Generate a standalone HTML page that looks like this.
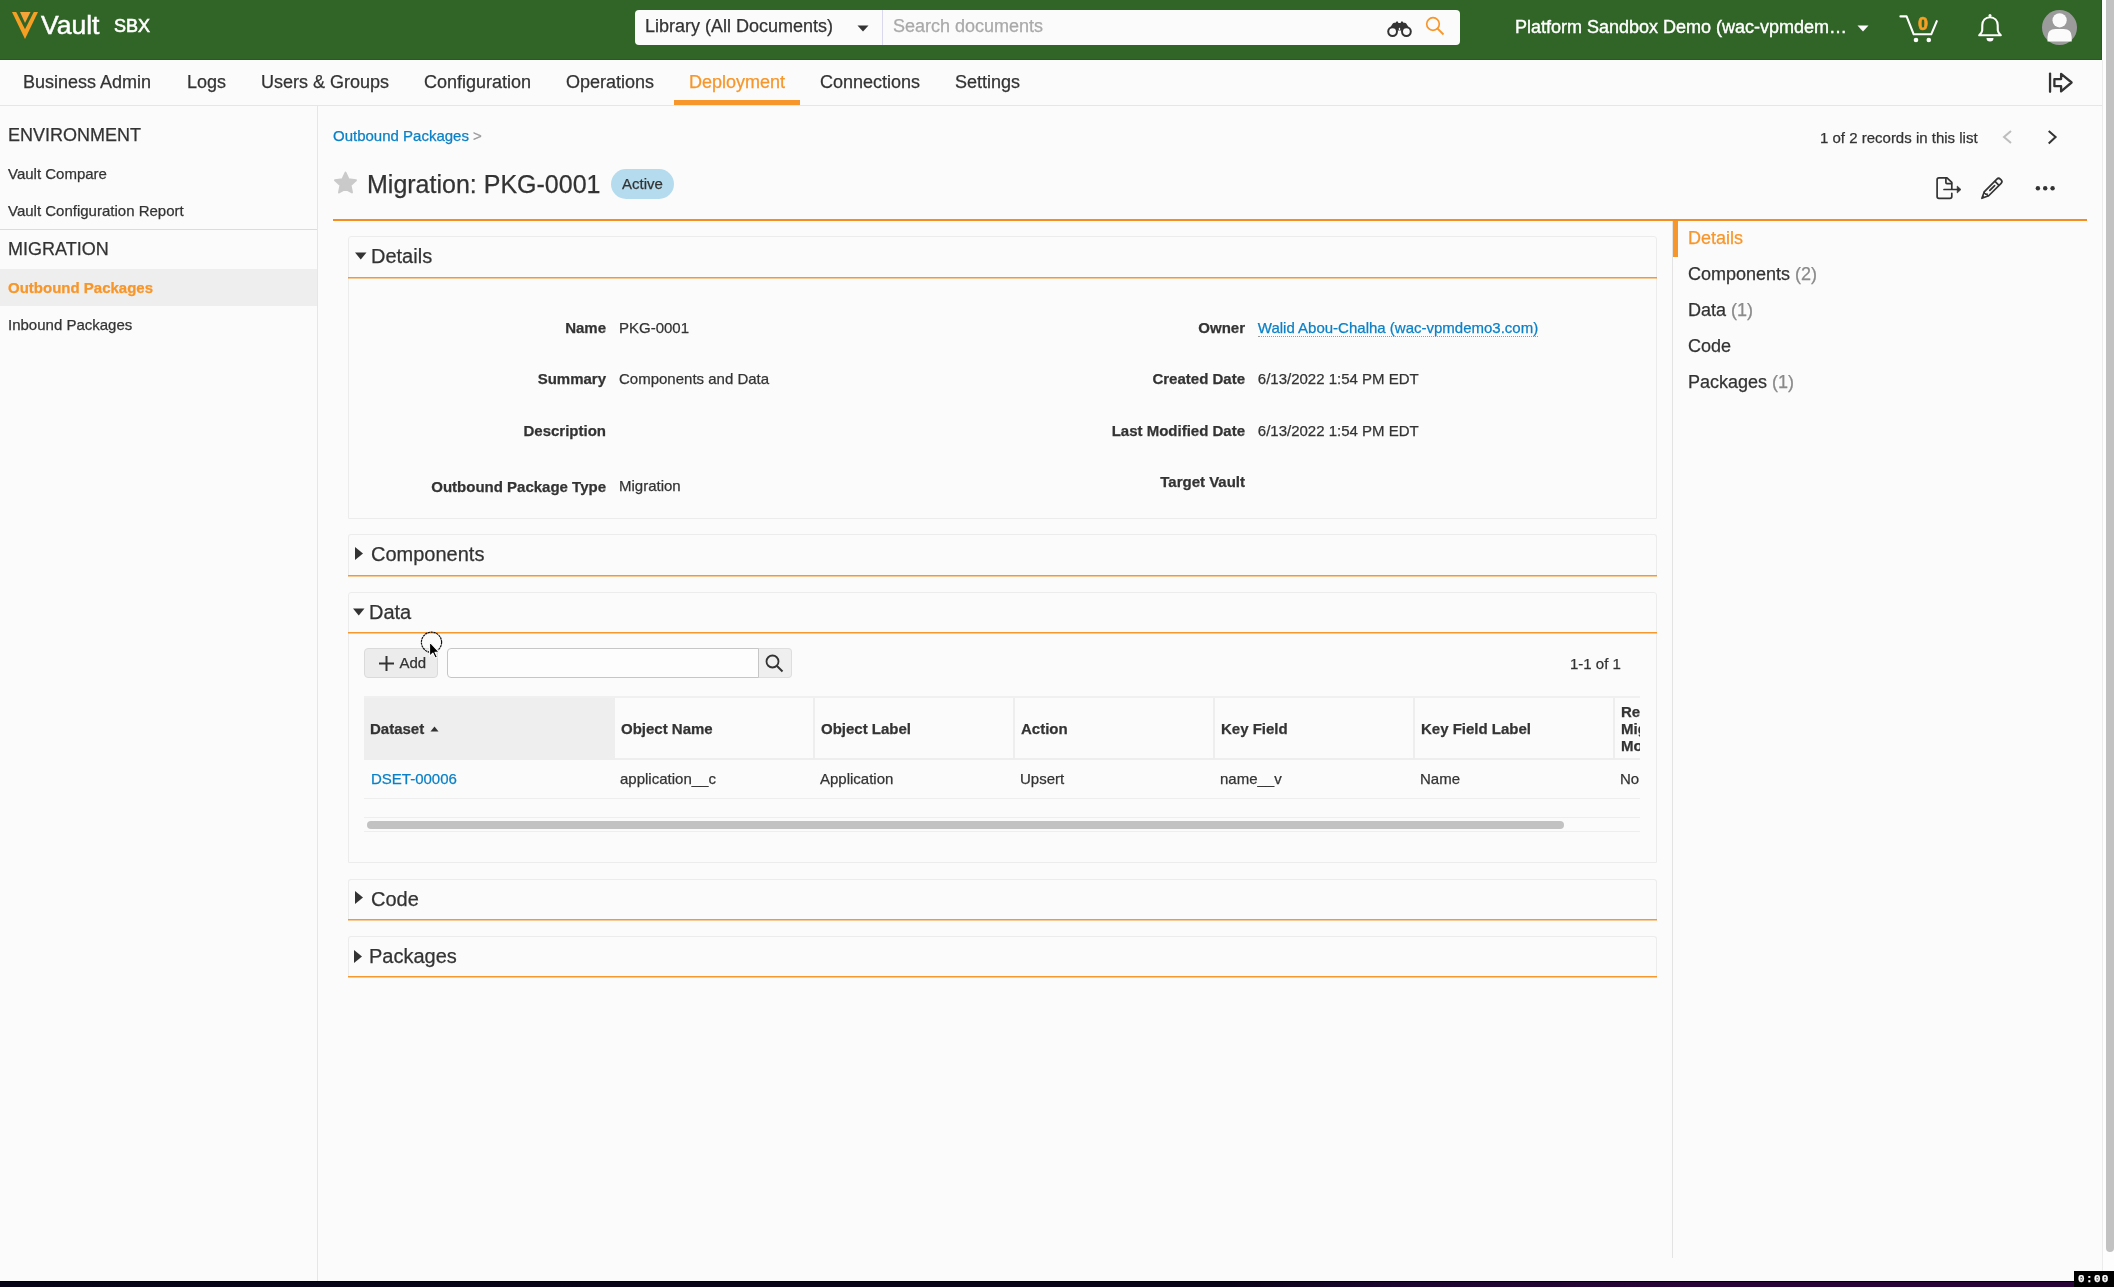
<!DOCTYPE html>
<html><head><meta charset="utf-8">
<style>
*{box-sizing:border-box;margin:0;padding:0}
body *{-webkit-text-stroke:0.25px currentColor}
html,body{width:2114px;height:1287px;overflow:hidden;background:#fbfbfb;font-family:"Liberation Sans",sans-serif;color:#333}
.a{position:absolute;white-space:nowrap}
#hdr{position:absolute;left:0;top:0;width:2102px;height:60px;background:#316527;border-right:1px solid #245c1a;border-bottom:1px solid #245c1a}
#nav{position:absolute;left:0;top:60px;width:2102px;height:46px;border-bottom:1px solid #e6e6e6;background:#fbfbfb}
.ni{position:absolute;top:72px;font-size:18px;line-height:21px;color:#333}
#side{position:absolute;left:0;top:106px;width:318px;height:1175px;border-right:1px solid #e6e6e6}
.sh{font-size:18px;line-height:21px;color:#333}
.sl{font-size:15px;line-height:18px;color:#333}
.lnk,.a.lnk,.td.lnk,.val.lnk,.sl.lnk{color:#0b80c6}
.org,.a.org,.rn.org,.sl.org,.ni.org{color:#f7962a}
.sec{position:absolute;left:348px;width:1309px;border:1px solid #ececec;border-bottom:none;border-radius:3px 3px 0 0}
.secbar{position:absolute;left:348px;width:1309px;height:1px;background:#f7982e;box-shadow:0 1px 0 rgba(247,152,46,0.5)}
.sect{font-size:20px;line-height:23px;color:#333}
.lbl{font-size:15px;line-height:18px;font-weight:bold;color:#333;text-align:right}
.val{font-size:15px;line-height:18px;color:#333}
.th{font-size:15px;line-height:18px;font-weight:bold;color:#333}
.td{font-size:15px;line-height:18px;color:#333}
.rn{font-size:18px;line-height:21px;color:#333}
.cnt{color:#8a8a8a}
</style></head><body><div id="wrap" style="position:absolute;left:0;top:0;width:2114px;height:1287px;will-change:transform">

<!-- HEADER -->
<div id="hdr"></div>
<svg class="a" style="left:11px;top:11px" width="28" height="28" viewBox="0 0 28 28">
  <polygon points="1,1 27,1 14,28" fill="#f5a024"/>
  <polygon points="5.2,1 22.8,1 14,18.2" fill="#316527"/>
  <polygon points="9,1 19.5,1 14,12" fill="#f5a43a"/>
</svg>
<div class="a" style="left:41px;top:10px;font-size:26.5px;line-height:30px;color:#fff;-webkit-text-stroke:0.5px #fff">Vault</div>
<div class="a" style="left:114px;top:16px;font-size:18px;line-height:21px;color:#fff;-webkit-text-stroke:0.6px #fff">SBX</div>

<div class="a" style="left:635px;top:10px;width:825px;height:35px;background:#fbfbfb;border-radius:4px"></div>
<div class="a" style="left:882px;top:10px;width:1px;height:35px;background:#d8d8ee"></div>
<div class="a" style="left:645px;top:16px;font-size:18px;line-height:21px;color:#333">Library (All Documents)</div>
<svg class="a" style="left:857px;top:25px" width="12" height="7" viewBox="0 0 12 7"><polygon points="0.5,0.5 11.5,0.5 6,6.5" fill="#333"/></svg>
<div class="a" style="left:893px;top:16px;font-size:18px;line-height:21px;color:#a9a9a9">Search documents</div>
<!-- binoculars -->
<svg class="a" style="left:1386px;top:20px" width="27" height="18" viewBox="0 0 27 18">
  <path d="M2.2,10.5 L6.8,3.6 Q7.4,2.7 8.4,2.7 L9.6,2.7 L10.4,1.6 L11.8,1.6 L12.4,3 L14.6,3 L15.2,1.6 L16.6,1.6 L17.4,2.7 L18.6,2.7 Q19.6,2.7 20.2,3.6 L24.8,10.5 Z" fill="#333"/>
  <circle cx="6.6" cy="11.6" r="4.4" fill="#fbfbfb" stroke="#333" stroke-width="2"/>
  <circle cx="20.4" cy="11.6" r="4.4" fill="#fbfbfb" stroke="#333" stroke-width="2"/>
  <path d="M13.5,7.6 L14.4,9 L13.5,10.4 L12.6,9 Z" fill="#fbfbfb"/>
</svg>
<!-- magnifier -->
<svg class="a" style="left:1424px;top:16px" width="22" height="20" viewBox="0 0 22 20">
  <circle cx="9" cy="8" r="6.3" fill="none" stroke="#f7962a" stroke-width="1.7"/>
  <line x1="13.5" y1="12.5" x2="19.5" y2="18.5" stroke="#f7962a" stroke-width="1.8"/>
</svg>

<div class="a" style="left:1515px;top:17px;font-size:18px;line-height:21px;color:#fff;-webkit-text-stroke:0.4px #fff">Platform Sandbox Demo (wac-vpmdem…</div>
<svg class="a" style="left:1857px;top:25px" width="12" height="7" viewBox="0 0 12 7"><polygon points="0.5,0.5 11.5,0.5 6,6.5" fill="#fff"/></svg>
<!-- cart -->
<svg class="a" style="left:1899px;top:13px" width="42" height="32" viewBox="0 0 42 32">
  <path d="M1.4,3.4 L7.6,3.4 L14.7,21.3 L32.2,21.3 L37.8,8.1" fill="none" stroke="#fff" stroke-width="2.1" stroke-linejoin="round" stroke-linecap="round"/>
  <circle cx="17" cy="27" r="2.3" fill="#fff"/>
  <circle cx="29.8" cy="27" r="2.3" fill="#fff"/>
</svg>
<div class="a" style="left:1918px;top:14px;font-size:18px;line-height:20px;font-weight:bold;color:#f7a024;-webkit-text-stroke:0.7px #f7a024">0</div>
<!-- bell -->
<svg class="a" style="left:1977px;top:13px" width="26" height="30" viewBox="0 0 26 30">
  <path d="M13,4.2 C8.5,4.2 5.5,7.5 5.3,12 L5.2,19 C5.1,21 4,22.5 2,24.5 L1.8,22.3 M13,4.2 C17.5,4.2 20.5,7.5 20.7,12 L20.8,19 C20.9,21 22,22.5 24,24.5" fill="none" stroke="none"/>
  <path d="M13,4.2 C8.5,4.2 5.5,7.5 5.3,12 L5.2,17.5 C5.1,19.5 3.8,20.8 2.2,22.3 L23.8,22.3 C22.2,20.8 20.9,19.5 20.8,17.5 L20.7,12 C20.5,7.5 17.5,4.2 13,4.2 Z" fill="none" stroke="#fff" stroke-width="2.1" stroke-linejoin="round"/>
  <circle cx="13" cy="2.6" r="1.5" fill="#fff"/>
  <path d="M9.5,25 A3.5,3.5 0 0 0 16.5,25 Z" fill="#fff"/>
</svg>
<!-- avatar -->
<svg class="a" style="left:2042px;top:10px" width="35" height="35" viewBox="0 0 35 35">
  <circle cx="17.5" cy="17.5" r="17.5" fill="#9b9b9b"/>
  <circle cx="17.6" cy="10.3" r="7.1" fill="#fbfbfb"/>
  <path d="M5.5,31.4 L5.5,27 Q5.5,19.1 13.5,19.1 L21.7,19.1 Q29.7,19.1 29.7,27 L29.7,31.4 Z" fill="#fbfbfb"/>
</svg>

<!-- NAV -->
<div id="nav"></div>
<div class="ni" style="left:23px">Business Admin</div>
<div class="ni" style="left:187px">Logs</div>
<div class="ni" style="left:261px">Users &amp; Groups</div>
<div class="ni" style="left:424px">Configuration</div>
<div class="ni" style="left:566px">Operations</div>
<div class="ni org" style="left:689px">Deployment</div>
<div class="a" style="left:674px;top:100px;width:126px;height:5px;background:#f7962a"></div>
<div class="ni" style="left:820px">Connections</div>
<div class="ni" style="left:955px">Settings</div>
<svg class="a" style="left:2047px;top:70px" width="28" height="25" viewBox="0 0 28 25">
  <line x1="3.05" y1="3.6" x2="3.05" y2="21.8" stroke="#333" stroke-width="2.3" stroke-linecap="round"/>
  <path d="M7.4,9.1 L14.1,9.1 L14.1,3.9 L24.6,12.5 L14.1,21.4 L14.1,16.2 L7.4,16.2 Z" fill="none" stroke="#333" stroke-width="2.3" stroke-linejoin="round"/>
</svg>

<!-- SCROLLBAR -->
<div class="a" style="left:2102px;top:60px;width:1px;height:1221px;background:#ececec"></div>
<div class="a" style="left:2103px;top:0;width:11px;height:1281px;background:#fdfdfd"></div>
<div class="a" style="left:2106px;top:0;width:8px;height:1252px;background:#c2c2c2;border-radius:0 0 4px 4px"></div>

<!-- SIDEBAR -->
<div id="side"></div>
<div class="a sh" style="left:8px;top:125px">ENVIRONMENT</div>
<div class="a sl" style="left:8px;top:165px">Vault Compare</div>
<div class="a sl" style="left:8px;top:202px">Vault Configuration Report</div>
<div class="a" style="left:0;top:229px;width:317px;height:1px;background:#dcdcdc"></div>
<div class="a sh" style="left:8px;top:239px">MIGRATION</div>
<div class="a" style="left:0;top:269px;width:317px;height:37px;background:#eeeeee"></div>
<div class="a sl org" style="left:8px;top:279px;font-weight:bold">Outbound Packages</div>
<div class="a sl" style="left:8px;top:316px">Inbound Packages</div>

<!-- MAIN HEAD -->
<div class="a sl lnk" style="left:333px;top:127px">Outbound Packages</div>
<div class="a sl" style="left:473px;top:127px;color:#999">&gt;</div>
<div class="a sl" style="left:1820px;top:129px">1 of 2 records in this list</div>
<svg class="a" style="left:2001px;top:129px" width="12" height="16" viewBox="0 0 12 16"><polyline points="10,2 3,8 10,14" fill="none" stroke="#bdbdbd" stroke-width="2"/></svg>
<svg class="a" style="left:2046px;top:129px" width="12" height="16" viewBox="0 0 12 16"><polyline points="2.7,2 9.6,8 2.7,14.5" fill="none" stroke="#333" stroke-width="2"/></svg>

<svg class="a" style="left:333px;top:170px" width="24" height="24" viewBox="0 0 24 24">
  <polygon points="12.50,2.60 15.62,9.31 22.96,10.20 17.54,15.24 18.97,22.50 12.50,18.90 6.03,22.50 7.46,15.24 2.04,10.20 9.38,9.31" fill="#cacaca" stroke="#cacaca" stroke-width="2" stroke-linejoin="round"/>
</svg>
<div class="a" style="left:367px;top:170px;font-size:25px;line-height:29px;color:#333">Migration: PKG-0001</div>
<div class="a" style="left:611px;top:169px;width:63px;height:30px;border-radius:15px;background:#b5dbee"></div>
<div class="a" style="left:622px;top:175px;font-size:15px;line-height:18px;color:#333">Active</div>

<!-- export icon -->
<svg class="a" style="left:1930px;top:170px" width="80" height="36" viewBox="0 0 80 36">
  <g fill="none" stroke="#333" stroke-width="1.7" stroke-linejoin="round" stroke-linecap="round">
  <path d="M21.8,19.2 L21.8,12.3 L17,7.9 L9,7.9 Q7.1,7.9 7.1,9.8 L7.1,26.4 Q7.1,28.3 9,28.3 L19.9,28.3 Q21.8,28.3 21.8,26.4 L21.8,23.3"/>
  <path d="M15.9,8.2 L15.9,12.6 Q15.9,13.6 16.9,13.6 L21.5,13.6"/>
  <line x1="14" y1="19.5" x2="27.5" y2="19.5"/>
  </g>
  <polygon points="27.2,16 31,19.5 27.2,23" fill="#333" stroke="#333" stroke-width="0.6" stroke-linejoin="round"/>
  <g transform="translate(51.6,28.6) rotate(-45)" fill="none" stroke="#333" stroke-width="1.7" stroke-linejoin="round">
    <path d="M0.4,0 L7,-3 L24.6,-3 Q27,-3 27,-0.6 L27,0.6 Q27,3 24.6,3 L7,3 Z"/>
    <line x1="21.6" y1="-3" x2="21.6" y2="3"/>
    <line x1="11.6" y1="0" x2="18.4" y2="0" stroke-linecap="round"/>
    <path d="M7,-3 Q5.2,-2.2 6.2,-0.9 Q5.4,0.2 7.2,0.6 Q5.8,1.6 7,3" stroke-width="1.4"/>
  </g>
  <g transform="translate(51.6,28.6) rotate(-45)"><path d="M0.4,0 L3.2,-1.3 L3.2,1.3 Z" fill="#333"/></g>
</svg>
<!-- ellipsis -->
<svg class="a" style="left:2034px;top:184px" width="23" height="8" viewBox="0 0 23 8">
  <circle cx="3.9" cy="4.2" r="2.2" fill="#333"/><circle cx="11.2" cy="4.2" r="2.2" fill="#333"/><circle cx="18.6" cy="4.2" r="2.2" fill="#333"/>
</svg>

<div class="a" style="left:333px;top:219px;width:1754px;height:2px;background:#f68d1f"></div>

<!-- RIGHT NAV -->
<div class="a" style="left:1672px;top:221px;width:1px;height:1037px;background:#e3e3e3"></div>
<div class="a" style="left:1673px;top:221px;width:5px;height:36px;background:#f7962a"></div>
<div class="a rn org" style="left:1688px;top:228px">Details</div>
<div class="a rn" style="left:1688px;top:264px">Components <span class="cnt">(2)</span></div>
<div class="a rn" style="left:1688px;top:300px">Data <span class="cnt">(1)</span></div>
<div class="a rn" style="left:1688px;top:336px">Code</div>
<div class="a rn" style="left:1688px;top:372px">Packages <span class="cnt">(1)</span></div>

<!-- SECTIONS -->
<div class="sec" style="top:236px;height:283px;border-bottom:1px solid #ececec"></div>
<div class="secbar" style="top:277px"></div>
<svg class="a" style="left:355px;top:252px" width="12" height="8" viewBox="0 0 12 8"><polygon points="0,0.5 11.5,0.5 5.75,7.5" fill="#333"/></svg>
<div class="a sect" style="left:371px;top:245px">Details</div>

<div class="a lbl" style="left:348px;width:258px;top:319px">Name</div>
<div class="a val" style="left:619px;top:319px">PKG-0001</div>
<div class="a lbl" style="left:348px;width:258px;top:370px">Summary</div>
<div class="a val" style="left:619px;top:370px">Components and Data</div>
<div class="a lbl" style="left:348px;width:258px;top:422px">Description</div>
<div class="a lbl" style="left:348px;width:258px;top:478px">Outbound Package Type</div>
<div class="a val" style="left:619px;top:477px">Migration</div>

<div class="a lbl" style="left:1000px;width:245px;top:319px">Owner</div>
<div class="a val lnk" style="left:1257.8px;top:319px;border-bottom:1px dotted #999;line-height:17px">Walid Abou-Chalha (wac-vpmdemo3.com)</div>
<div class="a lbl" style="left:1000px;width:245px;top:370px">Created Date</div>
<div class="a val" style="left:1257.8px;top:370px">6/13/2022 1:54 PM EDT</div>
<div class="a lbl" style="left:1000px;width:245px;top:422px">Last Modified Date</div>
<div class="a val" style="left:1257.8px;top:422px">6/13/2022 1:54 PM EDT</div>
<div class="a lbl" style="left:1000px;width:245px;top:473px">Target Vault</div>

<div class="sec" style="top:534px;height:41px"></div>
<div class="secbar" style="top:575px"></div>
<svg class="a" style="left:355px;top:547px" width="8" height="13" viewBox="0 0 8 13"><polygon points="0,0 8,6.5 0,13" fill="#333"/></svg>
<div class="a sect" style="left:371px;top:543px">Components</div>

<div class="sec" style="top:592px;height:271px;border-bottom:1px solid #ececec"></div>
<div class="secbar" style="top:632px"></div>
<svg class="a" style="left:353px;top:608px" width="12" height="8" viewBox="0 0 12 8"><polygon points="0,0.5 11.5,0.5 5.75,7.5" fill="#333"/></svg>
<div class="a sect" style="left:369px;top:601px">Data</div>

<div class="sec" style="top:879px;height:40px"></div>
<div class="secbar" style="top:919px"></div>
<svg class="a" style="left:355px;top:891px" width="8" height="13" viewBox="0 0 8 13"><polygon points="0,0 8,6.5 0,13" fill="#333"/></svg>
<div class="a sect" style="left:371px;top:888px">Code</div>

<div class="sec" style="top:936px;height:40px"></div>
<div class="secbar" style="top:976px"></div>
<svg class="a" style="left:354px;top:950px" width="8" height="13" viewBox="0 0 8 13"><polygon points="0,0 8,6.5 0,13" fill="#333"/></svg>
<div class="a sect" style="left:369px;top:945px">Packages</div>

<!-- DATA CONTENT -->
<div class="a" style="left:364px;top:648px;width:74px;height:30px;background:#ececec;border:1px solid #dadada;border-radius:4px"></div>
<svg class="a" style="left:378px;top:655px" width="17" height="17" viewBox="0 0 17 17"><line x1="8.5" y1="1" x2="8.5" y2="16" stroke="#333" stroke-width="2"/><line x1="1" y1="8.5" x2="16" y2="8.5" stroke="#333" stroke-width="2"/></svg>
<div class="a" style="left:399.5px;top:654px;font-size:15px;line-height:18px;color:#333">Add</div>
<div class="a" style="left:758px;top:648px;width:34px;height:30px;background:#efefef;border:1px solid #dedede;border-left:none;border-radius:0 4px 4px 0"></div>
<div class="a" style="left:447px;top:648px;width:312px;height:30px;background:#fdfdfd;border:1px solid #c6c6c6;border-radius:4px 0 0 4px"></div>
<svg class="a" style="left:764px;top:653px" width="20" height="20" viewBox="0 0 20 20"><circle cx="8.5" cy="8.5" r="6" fill="none" stroke="#333" stroke-width="1.8"/><line x1="13" y1="13" x2="18.5" y2="18.5" stroke="#333" stroke-width="2"/></svg>
<div class="a td" style="left:1570px;top:655px">1-1 of 1</div>

<!-- table -->
<div class="a" style="left:364px;top:696px;width:1276px;height:2px;background:#f0f0f0"></div>
<div class="a" style="left:364px;top:698px;width:249px;height:60px;background:#eeeeee"></div>
<div class="a" style="left:364px;top:758px;width:1276px;height:2px;background:#eeeeee"></div>
<div class="a" style="left:613px;top:698px;width:2px;height:60px;background:#eeeeee"></div>
<div class="a" style="left:813px;top:698px;width:2px;height:60px;background:#eeeeee"></div>
<div class="a" style="left:1013px;top:698px;width:2px;height:60px;background:#eeeeee"></div>
<div class="a" style="left:1213px;top:698px;width:2px;height:60px;background:#eeeeee"></div>
<div class="a" style="left:1413px;top:698px;width:2px;height:60px;background:#eeeeee"></div>
<div class="a" style="left:1613px;top:698px;width:2px;height:60px;background:#eeeeee"></div>
<div class="a th" style="left:370px;top:720px">Dataset</div>
<svg class="a" style="left:430px;top:726px" width="9" height="6" viewBox="0 0 9 6"><polygon points="0.5,5.5 8.5,5.5 4.5,0.5" fill="#333"/></svg>
<div class="a th" style="left:621px;top:720px">Object Name</div>
<div class="a th" style="left:821px;top:720px">Object Label</div>
<div class="a th" style="left:1021px;top:720px">Action</div>
<div class="a th" style="left:1221px;top:720px">Key Field</div>
<div class="a th" style="left:1421px;top:720px">Key Field Label</div>
<div style="position:absolute;left:1621px;top:703px;width:19px;height:52px;overflow:hidden">
  <div class="th" style="line-height:17px;white-space:nowrap">Re<br>Mig<br>Mo</div>
</div>
<div class="a td lnk" style="left:371px;top:770px">DSET-00006</div>
<div class="a td" style="left:620px;top:770px">application__c</div>
<div class="a td" style="left:820px;top:770px">Application</div>
<div class="a td" style="left:1020px;top:770px">Upsert</div>
<div class="a td" style="left:1220px;top:770px">name__v</div>
<div class="a td" style="left:1420px;top:770px">Name</div>
<div style="position:absolute;left:1620px;top:770px;width:20px;height:20px;overflow:hidden"><div class="td" style="white-space:nowrap">No</div></div>
<div class="a" style="left:364px;top:798px;width:1276px;height:1px;background:#eeeeee"></div>
<div class="a" style="left:364px;top:817px;width:1276px;height:1px;background:#eeeeee"></div>
<div class="a" style="left:367px;top:821px;width:1197px;height:8px;background:#c2c2c2;border-radius:4px"></div>
<div class="a" style="left:364px;top:831px;width:1276px;height:1px;background:#eeeeee"></div>

<!-- cursor -->
<svg class="a" style="left:419px;top:630px" width="26" height="32" viewBox="0 0 26 32">
  <circle cx="12.5" cy="12.25" r="10.1" fill="none" stroke="#111" stroke-width="1.2" stroke-dasharray="2.3 0.6"/>
  <g transform="translate(10.6,12) scale(1.12)">
  <path d="M0,0 L0,12.6 L2.9,9.9 L5,14.3 L6.9,13.5 L4.8,9.2 L8.7,9.2 Z" fill="#000" stroke="#fff" stroke-width="0.9" stroke-linejoin="round"/>
  </g>
</svg>

<!-- BOTTOM -->
<div class="a" style="left:0;top:1281px;width:2114px;height:6px;background:linear-gradient(90deg,#080417 0%,#0a0418 58%,#1c0630 66%,#2a0538 80%,#2a0538 100%);border-top:1px solid #000"></div>
<div class="a" style="left:2074px;top:1271px;width:40px;height:16px;background:#000"></div>
<div class="a" style="left:2078px;top:1273px;font-family:'Liberation Mono',monospace;font-size:11px;line-height:13px;font-weight:bold;letter-spacing:1.35px;color:#fff">0:00</div>

</div></body></html>
